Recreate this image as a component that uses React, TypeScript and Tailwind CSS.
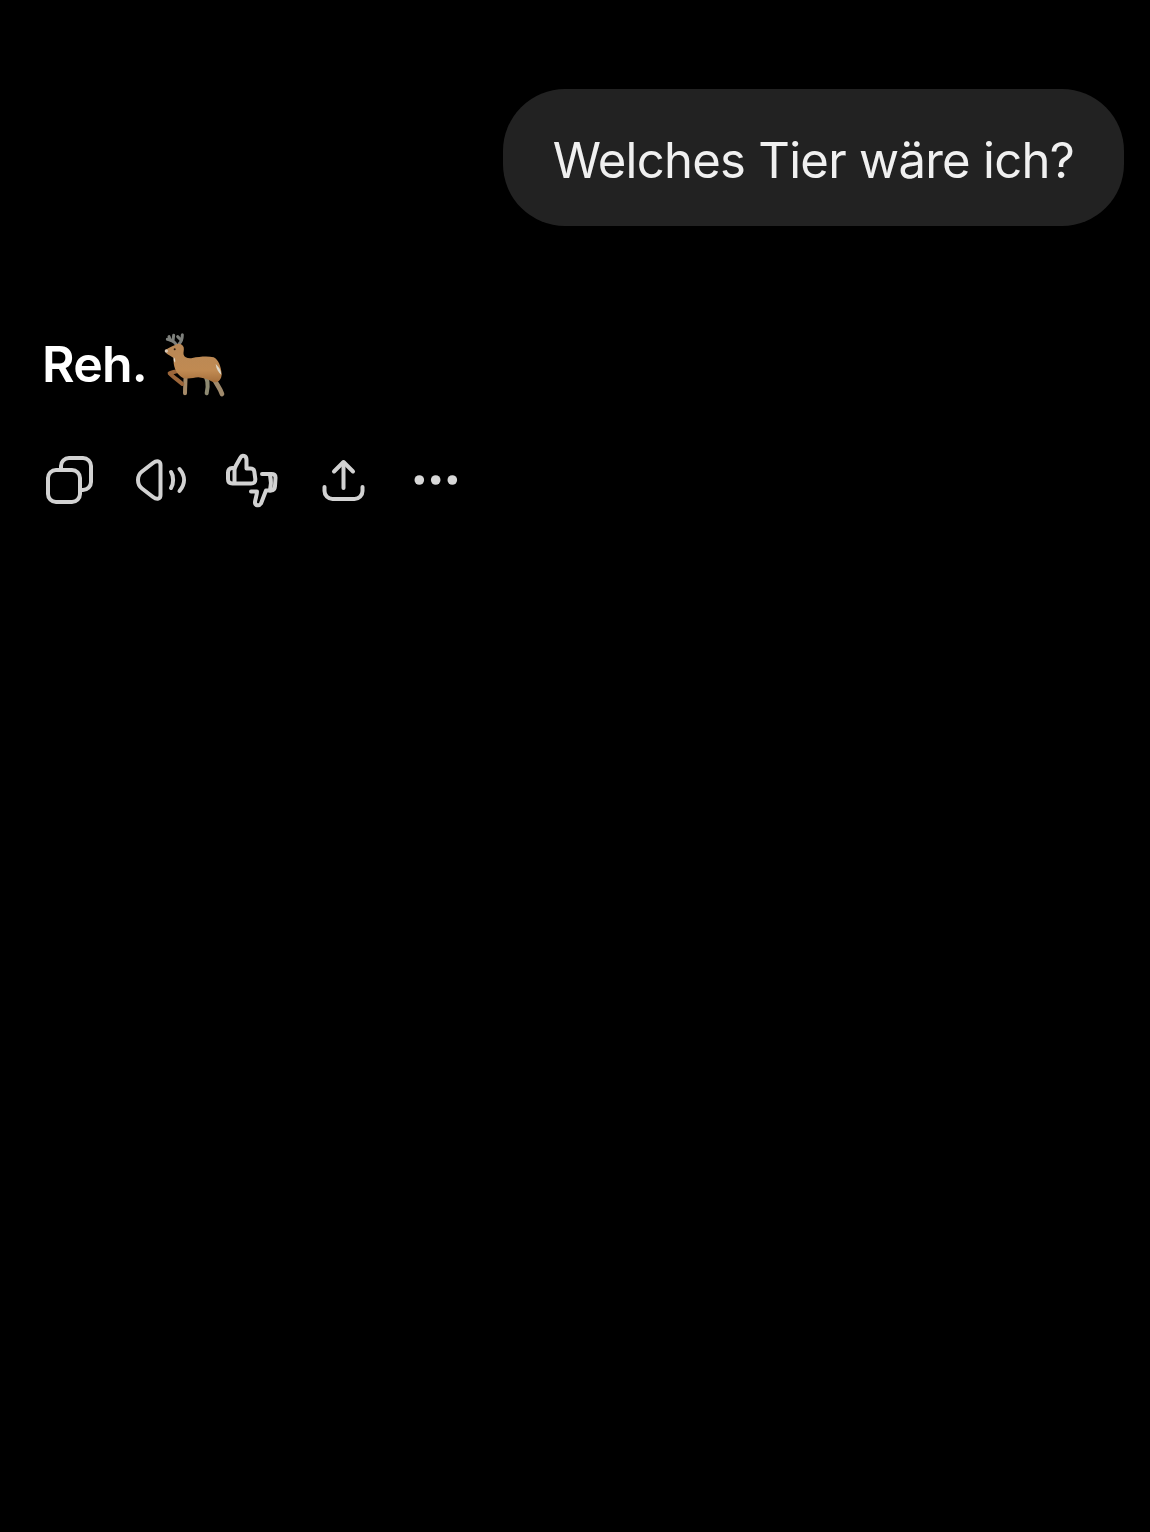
import React from 'react';

const iconClass = 'w-14 h-14 shrink-0 fill-none stroke-[#d2d2d2] stroke-[4]';

const CopyIcon = () => (
  <svg viewBox="0 0 56 56" className={iconClass} strokeLinecap="round" strokeLinejoin="round">
    <rect x="7" y="18" width="32" height="32" rx="8" />
    <path d="M20 18v-4a8 8 0 0 1 8-8h14a8 8 0 0 1 8 8v16a8 8 0 0 1-8 8h-3" />
  </svg>
);

const SpeakerIcon = () => (
  <svg viewBox="0 0 56 56" className={iconClass} strokeLinecap="round" strokeLinejoin="round">
    <path d="M20 11 9 19.500c-3 2.300-4 4-4 8.500s1 6.200 4 8.500L20 45c4 3 7.500 2 7.500-2V13c0-4-3.500-5-7.500-2Z" />
    <path d="M38 20c2.800 4 2.800 12 0 16" />
    <path d="M46.500 17c6 7 6 15 0 22" />
  </svg>
);

const ThumbsIcon = () => (
  <svg viewBox="0 0 56 56" className={iconClass} strokeLinecap="round" strokeLinejoin="round">
    <path d="M11 16H8C5.500 16 4 18 4 20.500V27c0 3 1.500 4.500 4.500 4.500H27c3 0 4.500-1.500 4.300-4.500l-1-7.500c-.3-2-1.800-3-3.800-3H22.500V8c0-4.500-4.500-5.500-6-2.500L12 13.500c-.8 1.500-1.500 3-1.500 5v13" />
    <path d="M27 39.500h6c0 3.500-1.500 7-2 10.500-.3 3.500 4 4.500 6 1.500l5-13h5c2.500-.3 3.800-1.500 4-4.500l.5-8c.2-3-1.500-4-4-4H38" />
    <path d="M46 23c1.200 5 1.200 10.500 0 15.500" />
  </svg>
);

const ShareIcon = () => (
  <svg viewBox="0 0 56 56" className={iconClass} strokeLinecap="round" strokeLinejoin="round">
    <path d="M27.500 36V10.500" />
    <path d="M18 19.500 27.500 10l9.500 9.500" />
    <path d="M8.500 35v4a8 8 0 0 0 8 8h22a8 8 0 0 0 8-8v-4" />
  </svg>
);

const DotsIcon = () => (
  <svg viewBox="0 0 56 56" className="w-14 h-14 shrink-0 fill-[#d8d8d8]">
    <circle cx="12.300" cy="28" r="4.800" />
    <circle cx="28.700" cy="28" r="4.800" />
    <circle cx="45.300" cy="28" r="4.800" />
  </svg>
);

// Hirsch-Emoji, von Hand gezeichnet
const DeerEmoji = () => (
  <svg viewBox="0 0 210 210" className="w-[70px] h-[70px] shrink-0 blur-[0.5px]">
    <defs>
      <linearGradient id="fell" x1="0" y1="0" x2="0" y2="1">
        <stop offset="0" stopColor="#b98856" />
        <stop offset="0.7" stopColor="#c08a52" />
        <stop offset="1" stopColor="#a56f3c" />
      </linearGradient>
    </defs>
    <g fill="none" stroke="#7e807c" strokeWidth="9" strokeLinecap="round" strokeLinejoin="round">
      <path d="M52 44 C46 34 36 30 25 28" />
      <path d="M42 32 L44 16" />
      <path d="M34 30 L30 20" />
      <path d="M60 42 C66 36 70 26 70 14" />
      <path d="M66 30 L56 20" />
    </g>
    <g fill="none" strokeLinecap="round" strokeLinejoin="round">
      <path d="M80 130 C80 150 78 170 78 190" stroke="#a58a68" strokeWidth="12" />
      <path d="M62 122 C50 124 40 126 32 130 C42 140 56 150 70 162" stroke="#9c663a" strokeWidth="12" />
      <path d="M134 130 C150 150 148 170 143 190" stroke="#8e8a72" strokeWidth="12" />
      <path d="M160 130 C164 155 182 170 189 192" stroke="#a08a6c" strokeWidth="14" />
    </g>
    <path
      d="M20 60 C28 52 38 50 50 44 C60 38 72 44 74 52 C76 60 72 68 74 74 C76 82 86 86 100 84 C122 80 146 78 164 82 C178 88 186 110 188 132 C188 150 176 160 162 156 C150 150 136 144 118 142 C100 144 80 150 66 140 C50 128 42 108 44 84 C36 78 28 76 22 70 Z"
      fill="url(#fell)"
    />
    <path d="M170 102 C179 110 186 120 187 134 C179 128 172 118 170 102 Z" fill="#ded8c8" />
    <path d="M44 82 C48 84 50 92 48 98 C44 94 43 88 44 82 Z" fill="#e6dccb" />
    <circle cx="22" cy="63" r="5" fill="#d9c8b6" />
    <circle cx="47" cy="58" r="3" fill="#2b1c10" />
  </svg>
);

export default function App() {
  return (
    <div className="min-h-[1532px] bg-black flex flex-col font-['Inter','Liberation_Sans',sans-serif]">
      <div className="pt-[89px] pr-[26px] flex justify-end">
        <div className="bg-[#222222] rounded-[62px] h-[137px] px-[50px] pt-[6px] flex items-center text-[#f0f0f0] text-[49px] font-normal tracking-[-0.72px] whitespace-nowrap">
          Welches Tier wäre ich?
        </div>
      </div>

      <div className="mt-[104px] pl-[42px] flex items-center gap-[12px]">
        <span className="text-white text-[50px] leading-[62px] font-semibold tracking-[-0.8px] pb-[2px]">Reh.</span>
        <DeerEmoji />
      </div>

      <div className="mt-[52px] pl-[41px] flex items-center gap-[35.5px]">
        <CopyIcon />
        <SpeakerIcon />
        <ThumbsIcon />
        <ShareIcon />
        <DotsIcon />
      </div>
    </div>
  );
}
